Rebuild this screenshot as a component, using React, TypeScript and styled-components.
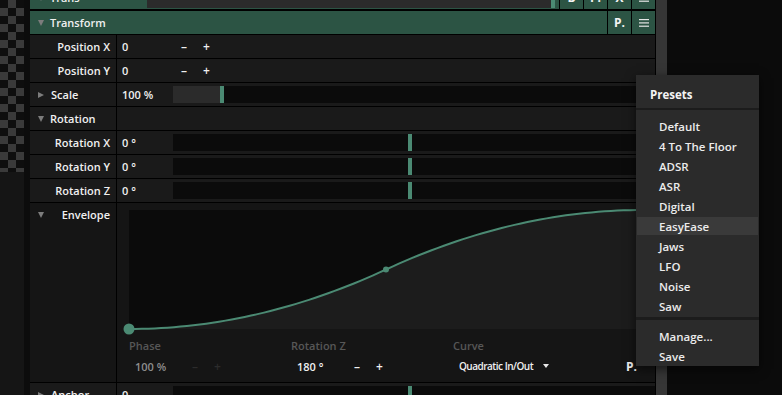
import styled, { createGlobalStyle } from "styled-components";

const ACCENT = "#4b8a73";
const HEADER = "#2c5444";

const GlobalStyle = createGlobalStyle`
  html, body {
    margin: 0;
    padding: 0;
    background: #0b0b0b;
  }
`;

// quadratic in/out curve of the envelope
const ease = (t: number) => (t < 0.5 ? 2 * t * t : 1 - 2 * (1 - t) * (1 - t));
const GW = 514;
const GH = 119;
const curvePts = Array.from({ length: 81 }, (_, i) => {
  const t = i / 80;
  return `${(t * GW).toFixed(2)},${(GH - ease(t) * GH).toFixed(2)}`;
});
const curveD = "M" + curvePts.join(" L");
const fillD = `${curveD} L${GW},${GH} L0,${GH} Z`;

const presets = [
  "Default",
  "4 To The Floor",
  "ADSR",
  "ASR",
  "Digital",
  "EasyEase",
  "Jaws",
  "LFO",
  "Noise",
  "Saw",
];

const Caret = ({ dir }: { dir: "down" | "right" }) => <CaretShape $dir={dir} />;

const BurgerIcon = () => (
  <svg width="10" height="8" viewBox="0 0 10 8">
    <rect x="0" y="0" width="10" height="1.2" fill="#e6e6e6" />
    <rect x="0" y="3.3" width="10" height="1.2" fill="#e6e6e6" />
    <rect x="0" y="6.6" width="10" height="1.2" fill="#e6e6e6" />
  </svg>
);

const Stepper = ({ dim, offset }: { dim?: boolean; offset: number }) => (
  <StepperWrap $dim={dim} $offset={offset}>
    <span>–</span>
    <span>+</span>
  </StepperWrap>
);

const Slider = ({ fill, tint }: { fill: number; tint?: boolean }) => (
  <SliderTrack>
    <SliderFill $w={fill} $tint={tint} />
    <SliderKnob />
  </SliderTrack>
);

const PropRow = ({ label, value, children }: { label: string; value: string; children?: React.ReactNode }) => (
  <Row>
    <LabelCell>{label}</LabelCell>
    <ValueCell>
      <ValueText>{value}</ValueText>
      {children}
    </ValueCell>
  </Row>
);

const App = () => {
  return (
    <>
      <GlobalStyle />
      <Screen>
        <Gutter>
          <GutterTrack>
            <Checker />
            <GutterFill />
          </GutterTrack>
          <GutterEdge />
        </Gutter>

        <Panel>
          <List>
            <HeaderRow $edge={2}>
              <HeaderTitle $w={117}>
                <Caret dir="down" />
                Trans
              </HeaderTitle>
              <HeaderSlider>
                <SliderFill $w={404} $tint />
                <SliderKnob />
              </HeaderSlider>
              <Spacer />
              <IconButton>B</IconButton>
              <IconButton>P.</IconButton>
              <IconButton>X</IconButton>
              <IconButton>
                <BurgerIcon />
              </IconButton>
            </HeaderRow>

            <HeaderRow>
              <HeaderTitle>
                <Caret dir="down" />
                Transform
              </HeaderTitle>
              <Spacer />
              <IconButton>P.</IconButton>
              <IconButton>
                <BurgerIcon />
              </IconButton>
            </HeaderRow>

            <PropRow label="Position X" value="0">
              <Stepper offset={8} />
            </PropRow>
            <PropRow label="Position Y" value="0">
              <Stepper offset={8} />
            </PropRow>

            <Row>
              <SectionCell>
                <Caret dir="right" />
                Scale
              </SectionCell>
              <ValueCell>
                <ValueText>100 %</ValueText>
                <Slider fill={47} tint />
              </ValueCell>
            </Row>

            <Row>
              <SectionCell>
                <Caret dir="down" />
                Rotation
              </SectionCell>
              <ValueCell />
            </Row>

            <PropRow label="Rotation X" value="0 °">
              <Slider fill={235} />
            </PropRow>
            <PropRow label="Rotation Y" value="0 °">
              <Slider fill={235} />
            </PropRow>
            <PropRow label="Rotation Z" value="0 °">
              <Slider fill={235} />
            </PropRow>

            <EnvelopeRow>
              <EnvLabel>
                <Caret dir="down" />
                <span>Envelope</span>
              </EnvLabel>
              <EnvBody>
                <Graph width={GW} height={GH} viewBox={`0 0 ${GW} ${GH}`}>
                  <rect x="0" y="0" width={GW} height={GH} fill="#0b0b0b" />
                  <path d={fillD} fill="#1c1c1c" />
                  <path d={curveD} fill="none" stroke={ACCENT} strokeWidth="2" />
                  <circle cx={GW / 2} cy={GH / 2} r="3" fill={ACCENT} />
                  <circle cx="0" cy={GH} r="5.5" fill={ACCENT} />
                </Graph>
                <Footer>
                  <Param>
                    <ParamLabel>Phase</ParamLabel>
                    <ParamValue $dim>
                      <ParamText>100 %</ParamText>
                      <Stepper dim offset={0} />
                    </ParamValue>
                  </Param>
                  <Param>
                    <ParamLabel>Rotation Z</ParamLabel>
                    <ParamValue>
                      <ParamText>180 °</ParamText>
                      <Stepper offset={0} />
                    </ParamValue>
                  </Param>
                  <Param>
                    <ParamLabel>Curve</ParamLabel>
                    <ParamValue>
                      <CurveName>Quadratic In/Out</CurveName>
                      <DropArrow />
                    </ParamValue>
                  </Param>
                  <Param>
                    <ParamLabel />
                    <ParamValue $end>P.</ParamValue>
                  </Param>
                </Footer>
              </EnvBody>
            </EnvelopeRow>

            <Row>
              <SectionCell>
                <Caret dir="right" />
                Anchor
              </SectionCell>
              <ValueCell>
                <ValueText>0</ValueText>
                <Slider fill={235} />
              </ValueCell>
            </Row>
          </List>
        </Panel>

        <ScrollTrack />
        <Void />

        <Menu>
          <MenuTitle>Presets</MenuTitle>
          <MenuGroup>
            {presets.map((p) => (
              <MenuItem key={p} $active={p === "EasyEase"}>
                {p}
              </MenuItem>
            ))}
          </MenuGroup>
          <MenuDivider />
          <MenuGroup $last>
            <MenuItem>Manage...</MenuItem>
            <MenuItem>Save</MenuItem>
          </MenuGroup>
        </Menu>
      </Screen>
    </>
  );
};

export default App;

const Screen = styled.div`
  position: relative;
  display: flex;
  width: 782px;
  height: 395px;
  overflow: hidden;
  background: #0b0b0b;
  font-family: "Open Sans", "Noto Sans", sans-serif;
  font-size: 11px;
  font-weight: 600;
  color: #f0f0f0;
`;

const Gutter = styled.div`
  display: flex;
  width: 30px;
  flex-shrink: 0;
`;

const GutterTrack = styled.div`
  display: flex;
  flex-direction: column;
  width: 24px;
`;

const Checker = styled.div`
  height: 172px;
  background: repeating-conic-gradient(#3a3a3a 0% 25%, #0e0e0e 0% 50%) 0 0 / 16px 16px;
`;

const GutterFill = styled.div`
  flex: 1;
  background: #151515;
`;

const GutterEdge = styled.div`
  width: 6px;
  background: #0c0c0c;
`;

const Panel = styled.div`
  width: 626px;
  flex-shrink: 0;
  box-sizing: border-box;
  border-right: 1px solid #000;
  background: #1a1a1a;
`;

const List = styled.div`
  display: flex;
  flex-direction: column;
  margin-top: -14px;
`;

const Row = styled.div<{ $edge?: number }>`
  display: flex;
  flex-shrink: 0;
  height: ${(p) => 23 + (p.$edge ?? 1)}px;
  box-sizing: border-box;
  border-bottom: ${(p) => p.$edge ?? 1}px solid #000;
  background: #1a1a1a;
`;

const HeaderRow = styled(Row)`
  background: ${HEADER};
  align-items: center;
`;

const HeaderTitle = styled.div<{ $w?: number }>`
  display: flex;
  align-items: center;
  gap: 6px;
  box-sizing: border-box;
  width: ${(p) => (p.$w ? `${p.$w}px` : "auto")};
  padding-left: 8px;
`;

const HeaderSlider = styled.div`
  display: flex;
  align-self: flex-end;
  height: 17px;
  width: 408px;
  margin-bottom: 1px;
`;

const Spacer = styled.div`
  flex: 1;
`;

const IconButton = styled.div`
  display: flex;
  align-items: center;
  justify-content: center;
  width: 24px;
  height: 100%;
  box-sizing: border-box;
  border-left: 1px solid #000;
  font-size: 12px;
  font-weight: 700;
  color: #f4f4f4;
`;

const CaretShape = styled.span<{ $dir: "down" | "right" }>`
  display: inline-block;
  width: 0;
  height: 0;
  flex-shrink: 0;
  ${(p) =>
    p.$dir === "down"
      ? `border-left: 3.5px solid transparent;
         border-right: 3.5px solid transparent;
         border-top: 6px solid #7c7c7c;`
      : `border-top: 3.5px solid transparent;
         border-bottom: 3.5px solid transparent;
         border-left: 6px solid #7c7c7c;
         margin-right: 1px;`}
`;

const LabelCell = styled.div`
  display: flex;
  align-items: center;
  justify-content: flex-end;
  width: 87px;
  flex-shrink: 0;
  box-sizing: border-box;
  padding-right: 6px;
  border-right: 1px solid #000;
  white-space: nowrap;
`;

const SectionCell = styled(LabelCell)`
  justify-content: flex-start;
  gap: 6px;
  padding: 0 0 0 8px;
`;

const ValueCell = styled.div`
  display: flex;
  align-items: center;
  flex: 1;
  padding-left: 5px;
`;

const ValueText = styled.div`
  width: 51px;
  flex-shrink: 0;
  white-space: nowrap;
`;

const StepperWrap = styled.div<{ $dim?: boolean; $offset: number }>`
  display: flex;
  gap: 16px;
  margin-left: ${(p) => p.$offset}px;
  color: ${(p) => (p.$dim ? "#2c2c2c" : "#f0f0f0")};
  font-size: 12px;
`;

const SliderTrack = styled.div`
  display: flex;
  flex: 1;
  height: 17px;
  background: #0b0b0b;
`;

const SliderFill = styled.div<{ $w: number; $tint?: boolean }>`
  width: ${(p) => p.$w}px;
  background: ${(p) => (p.$tint ? "#2b2b2b" : "transparent")};
`;

const SliderKnob = styled.div`
  width: 4px;
  background: ${ACCENT};
`;

const EnvelopeRow = styled(Row)`
  height: 180px;
  background: #151515;
`;

const EnvLabel = styled(LabelCell)`
  align-items: flex-start;
  justify-content: space-between;
  padding: 0 6px 0 8px;
  line-height: 23px;

  > span:first-child {
    margin-top: 9px;
  }
`;

const EnvBody = styled.div`
  display: flex;
  flex-direction: column;
  flex: 1;
  padding: 7px 12px 0 12px;
`;

const Graph = styled.svg`
  display: block;
  overflow: visible;
`;

const Footer = styled.div`
  display: grid;
  grid-template-columns: 162px 162px 162px 1fr;
  padding-top: 10px;
`;

const Param = styled.div`
  display: flex;
  flex-direction: column;
`;

const ParamLabel = styled.div`
  height: 14px;
  line-height: 14px;
  color: #575757;
  white-space: nowrap;
`;

const ParamValue = styled.div<{ $dim?: boolean; $end?: boolean }>`
  display: flex;
  align-items: center;
  justify-content: ${(p) => (p.$end ? "flex-end" : "flex-start")};
  height: 20px;
  margin-top: 3px;
  padding: ${(p) => (p.$end ? "0 6px 0 0" : "0 0 0 6px")};
  color: ${(p) => (p.$dim ? "#8e8e8e" : "#f0f0f0")};
  font-size: ${(p) => (p.$end ? "12px" : "11px")};
  font-weight: ${(p) => (p.$end ? 700 : 600)};
`;

const ParamText = styled.div`
  width: 57px;
  white-space: nowrap;
`;

const CurveName = styled.span`
  font-size: 10px;
  letter-spacing: -0.5px;
  white-space: nowrap;
`;

const DropArrow = styled.span`
  width: 0;
  height: 0;
  margin-left: 10px;
  border-left: 3px solid transparent;
  border-right: 3px solid transparent;
  border-top: 4px solid #e8e8e8;
`;

const ScrollTrack = styled.div`
  width: 11px;
  flex-shrink: 0;
  background: #363636;
`;

const Void = styled.div`
  flex: 1;
  background: #0b0b0b;
`;

const Menu = styled.div`
  position: absolute;
  left: 636px;
  top: 75px;
  width: 123px;
  background: #2b2b2b;
  box-shadow: 0 3px 10px rgba(0, 0, 0, 0.6);
  font-size: 11.5px;
  color: #ececec;
`;

const MenuTitle = styled.div`
  display: flex;
  align-items: center;
  height: 35px;
  box-sizing: border-box;
  padding: 6px 0 0 14px;
  border-bottom: 2px solid #1c1c1c;
  font-weight: 700;
  color: #f4f4f4;
`;

const MenuGroup = styled.div<{ $last?: boolean }>`
  padding: ${(p) => (p.$last ? "6px 0 0" : "6px 0 1px")};
`;

const MenuDivider = styled.div`
  height: 3px;
  background: #1c1c1c;
`;

const MenuItem = styled.div<{ $active?: boolean }>`
  display: flex;
  align-items: center;
  height: 20px;
  margin: 0 1px;
  padding-left: 22px;
  white-space: nowrap;
  background: ${(p) => (p.$active ? "#3a3a3a" : "transparent")};
  box-shadow: ${(p) => (p.$active ? "inset 0 1px 0 #2b2b2b, inset 0 -1px 0 #2b2b2b" : "none")};
`;
